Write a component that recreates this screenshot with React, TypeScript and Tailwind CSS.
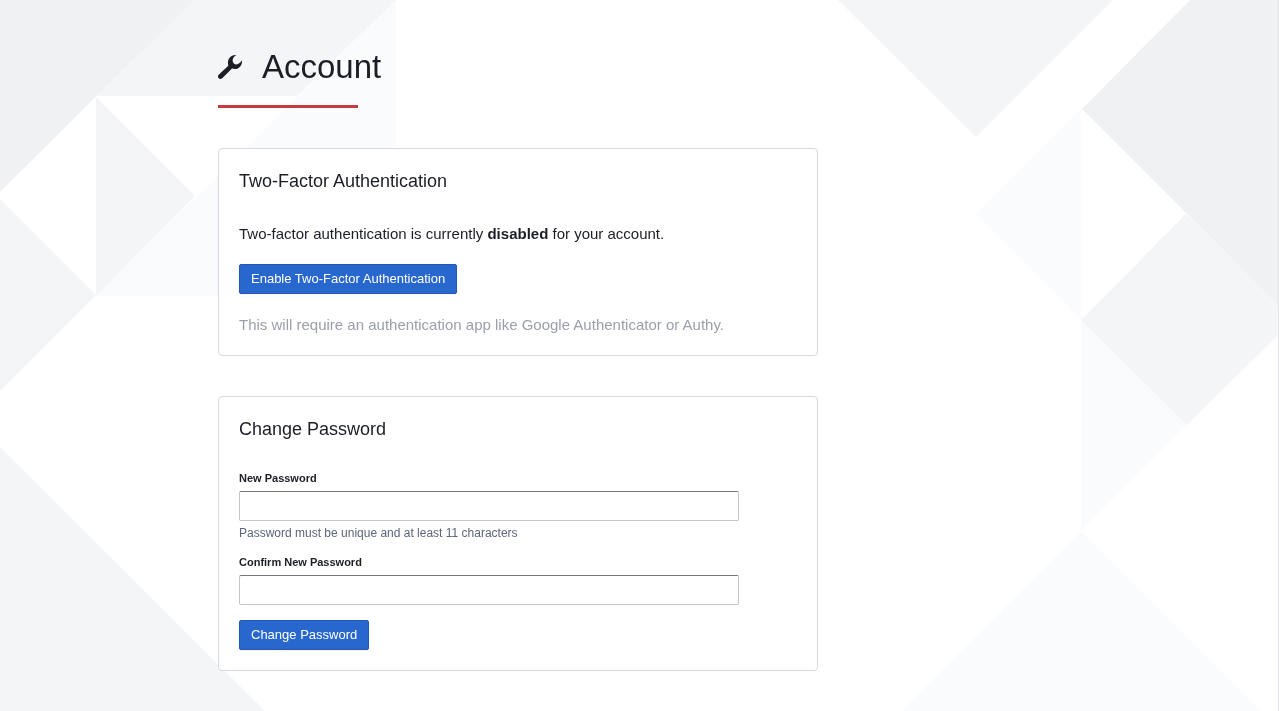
import { useState } from 'react';
import type { FormEvent, ReactNode } from 'react';

const MIN_PASSWORD_LENGTH = 11;

function Background() {
  return (
    <div aria-hidden="true" className="fixed inset-0 -z-10 overflow-hidden border-r border-[#e3e4e7] bg-white">
      <svg className="absolute left-0 top-0" width="400" height="720" viewBox="0 0 400 720">
        <path fill="#fafbfd" d="M396 0v296H96z" />
        <path fill="#f4f5f7" d="M190 0h206l-99 96H93z" />
        <path fill="#f0f1f3" d="M0 0h193L0 192z" />
        <path fill="#f4f5f7" d="M96 97l99 99-99 100z" />
        <path fill="#f4f5f7" d="M0 199l96 96-96 96z" />
        <path fill="#f4f5f7" d="M0 447l274 273H0z" />
      </svg>
      <svg className="absolute right-0 top-0" width="448" height="720" viewBox="0 0 448 720">
        <path fill="#f4f5f7" d="M8 0h275L146 137z" />
        <path fill="#fafbfd" d="M146 214l105-105v211z" />
        <path fill="#fafbfd" d="M251 320l106 105-106 106z" />
        <path fill="#f4f5f7" d="M356 214l92 90v31l-91 90-106-105z" />
        <path fill="#f0f1f3" d="M360 0h88v305L252 109z" />
        <path fill="#fafbfd" d="M251 531L63 720h377z" />
      </svg>
    </div>
  );
}

function WrenchIcon() {
  return (
    <svg aria-hidden="true" className="h-6 w-6 shrink-0" viewBox="0 0 24 24" fill="currentColor">
      <path d="M18.300 .1C15.600 1.800 14.300 4 14.700 6.200c.4 2.100 1.800 3.300 3.700 3.200 2-.1 3.900-1.600 5.400-4.100 .8 4.400-2.200 8.700-6.800 8.800-1.200 0-2.100-.2-3-.5L4.200 23.200c-1.100 1-2.500 1-3.500 0s-1-2.500 0-3.500l9.600-8.900C8.800 5.500 11.800-.5 18.300 .1z" />
    </svg>
  );
}

function Card({ title, children }: { title: string; children: ReactNode }) {
  return (
    <section className="mb-10 w-full max-w-[600px] rounded border border-[#d7d9e0] bg-white p-5">
      <h2 className="mb-[30px] text-[18px] leading-6">{title}</h2>
      {children}
    </section>
  );
}

function Button({ children, type = 'button' }: { children: ReactNode; type?: 'button' | 'submit' }) {
  return (
    <button
      type={type}
      className="block h-[30px] rounded-xs border border-[#2458b0] bg-[#2868ce] px-[11px] text-[13px] text-white shadow-xs hover:bg-[#2059b8]"
    >
      {children}
    </button>
  );
}

interface FieldProps {
  id: string;
  label: string;
  value: string;
  hint?: string;
  onChange: (value: string) => void;
}

function PasswordField({ id, label, value, hint, onChange }: FieldProps) {
  return (
    <div className="mb-[15px]">
      <label htmlFor={id} className="mb-[6px] block text-[11px] leading-[14px] font-bold">
        {label}
      </label>
      <input
        id={id}
        type="password"
        value={value}
        onChange={(e) => onChange(e.target.value)}
        className="block h-[30px] w-full max-w-[500px] rounded-xs border border-[#c4c5c8] border-t-[#777779] bg-white px-2 text-[13px] outline-none focus:border-[#2868ce]"
      />
      {hint && <p className="mt-[5px] text-[12px] leading-[14px] text-[#5c6578]">{hint}</p>}
    </div>
  );
}

export default function App() {
  const [password, setPassword] = useState('');
  const [confirm, setConfirm] = useState('');

  const handleSubmit = (e: FormEvent) => {
    e.preventDefault();
    if (password.length < MIN_PASSWORD_LENGTH || password !== confirm) return;
    setPassword('');
    setConfirm('');
  };

  return (
    <div className="font-['Liberation_Sans',Arial,sans-serif] text-[15px] text-[#1b1e25]">
      <Background />
      <main className="mx-auto max-w-[843px] pt-[46px]">
        <header className="mb-10">
          <h1 className="flex items-center gap-5 text-[33px] leading-[42px]">
            <WrenchIcon />
            Account
          </h1>
          <div className="mt-[17px] h-[3px] w-[140px] bg-[#c93a40]" />
        </header>

        <Card title="Two-Factor Authentication">
          <p className="mb-5 leading-[21px]">
            Two-factor authentication is currently <strong>disabled</strong> for your account.
          </p>
          <Button>Enable Two-Factor Authentication</Button>
          <p className="mt-5 leading-[21px] text-[#9a9fab]">
            This will require an authentication app like Google Authenticator or Authy.
          </p>
        </Card>

        <Card title="Change Password">
          <form onSubmit={handleSubmit}>
            <PasswordField
              id="new-password"
              label="New Password"
              value={password}
              onChange={setPassword}
              hint={`Password must be unique and at least ${MIN_PASSWORD_LENGTH} characters`}
            />
            <PasswordField
              id="confirm-password"
              label="Confirm New Password"
              value={confirm}
              onChange={setConfirm}
            />
            <Button type="submit">Change Password</Button>
          </form>
        </Card>
      </main>
    </div>
  );
}
